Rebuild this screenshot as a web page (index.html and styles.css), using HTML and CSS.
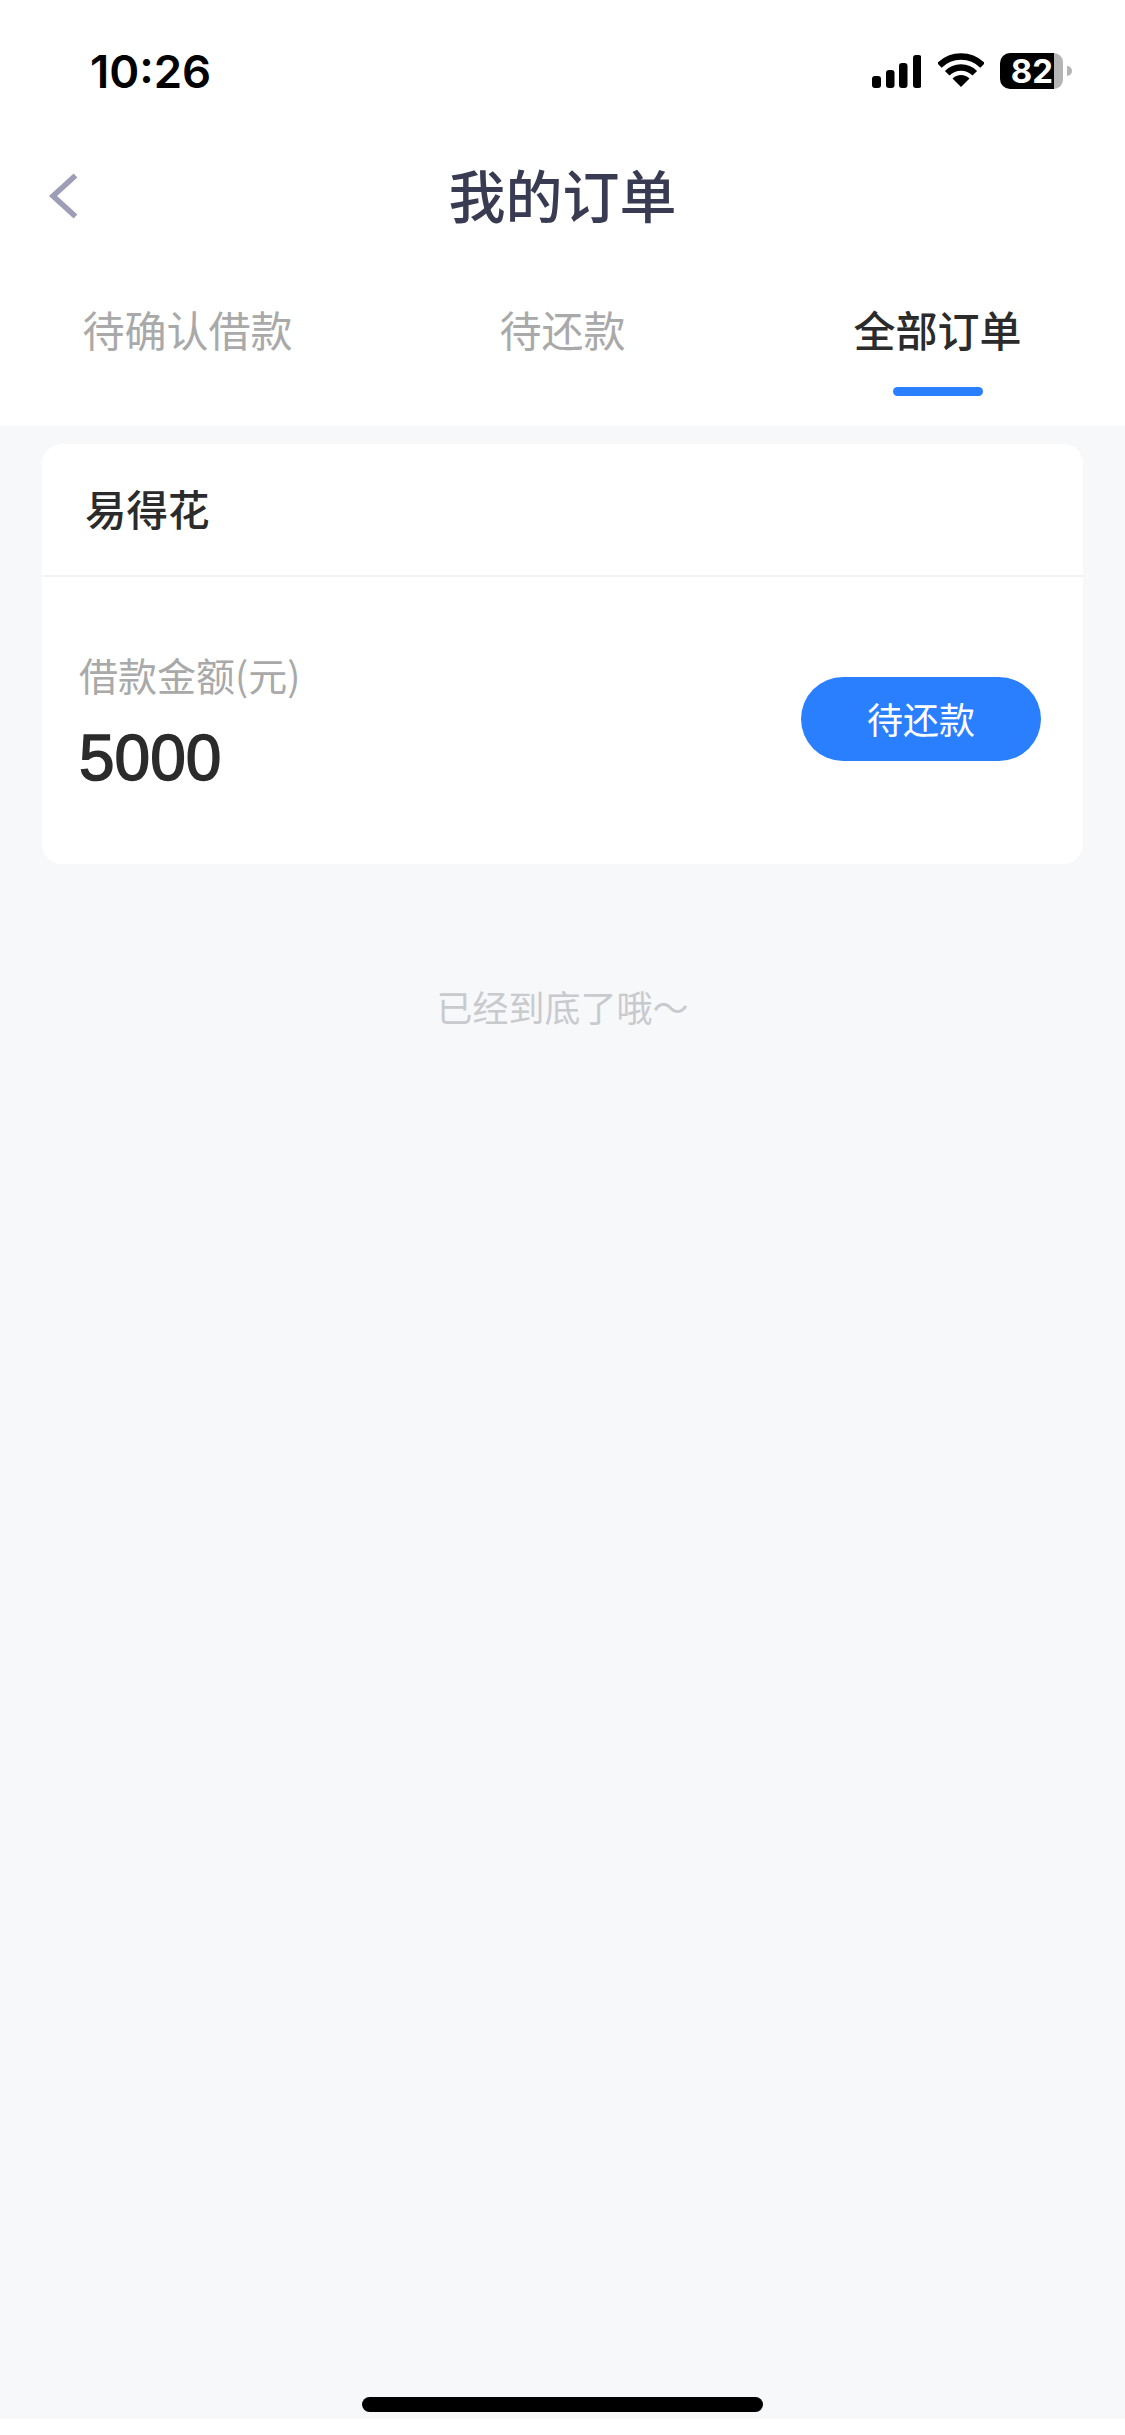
FILE: index.html
```html
<!DOCTYPE html>
<html lang="zh-CN">
<head>
<meta charset="utf-8">
<title>我的订单</title>
<link rel="stylesheet" href="styles.css">
</head>
<body>
<div class="page">
  <header class="top">
    <div class="status">
      <span class="time">10:26</span>
      <div class="status-icons">
        <svg class="signal" viewBox="0 0 49 33" aria-hidden="true">
          <rect x="0" y="21" width="9" height="12" rx="3"/>
          <rect x="14" y="15" width="8.500" height="18" rx="3"/>
          <rect x="27" y="8" width="8.500" height="25" rx="3"/>
          <rect x="41" y="0" width="8.500" height="33" rx="3"/>
        </svg>
        <svg class="wifi" viewBox="0 0 46 34" aria-hidden="true">
          <path class="arc" d="M1.400 12.400A30.500 30.500 0 0 1 44.600 12.400"/>
          <path class="arc" d="M9.200 20.200A19.500 19.500 0 0 1 36.800 20.200"/>
          <path d="M23 34L14.500 25.500A12 12 0 0 1 31.500 25.500Z"/>
        </svg>
        <div class="battery">
          <span class="battery-level">82</span>
          <span class="battery-rest"></span>
          <span class="battery-nub"></span>
        </div>
      </div>
    </div>
    <div class="nav">
      <svg class="back" viewBox="0 0 30 46" aria-hidden="true">
        <path d="M27.500 2.500L5 23L27.500 43.500"/>
      </svg>
      <h1 class="title">我的订单</h1>
    </div>
    <nav class="tabs">
      <div class="tab">待确认借款</div>
      <div class="tab">待还款</div>
      <div class="tab tab-active">全部订单</div>
    </nav>
  </header>
  <main class="content">
    <section class="card">
      <div class="card-head">易得花</div>
      <div class="card-body">
        <div class="amount">
          <div class="amount-label">借款金额(元)</div>
          <div class="amount-value">5000</div>
        </div>
        <div class="pill">待还款</div>
      </div>
    </section>
    <p class="end">已经到底了哦～</p>
    <div class="home-bar"></div>
  </main>
  <div class="bottom-strip"></div>
</div>
</body>
</html>
```
FILE: styles.css
```css
* { box-sizing: border-box; }
html, body { margin: 0; padding: 0; background: #fff; }
body { font-family: "Noto Sans CJK SC", "Noto Sans", sans-serif; }
.page { width: 1125px; height: 2435px; display: flex; flex-direction: column; }

.top { background: #fff; height: 426px; flex: none; }
.status { height: 142px; padding: 53px 53px 0 90px; display: flex; justify-content: space-between; align-items: flex-start; }
.time { font: 600 45.500px/38px Inter, sans-serif; color: #000; }
.status-icons { display: flex; align-items: flex-start; }
.signal { width: 49px; height: 33px; margin-top: 2px; fill: #000; }
.wifi { width: 46px; height: 34px; margin-left: 17px; fill: #000; }
.wifi .arc { fill: none; stroke: #000; stroke-width: 6.500; }
.battery { display: flex; align-items: center; height: 36px; margin-left: 16px; }
.battery-level { width: 54px; height: 36px; background: #000; border-radius: 10px 0 0 10px; color: #fff; font: 700 33px/36px Inter, sans-serif; text-align: right; padding-right: 1px; }
.battery-rest { width: 9px; height: 36px; background: #b5b5b5; border-radius: 0 10px 10px 0; }
.battery-nub { width: 5px; height: 10px; margin-left: 4px; background: #b5b5b5; border-radius: 0 5px 5px 0; }

.nav { height: 110px; display: flex; align-items: center; padding-left: 48px; margin-top: -1px; }
.back { width: 30px; height: 46px; fill: none; stroke: #9d9db8; stroke-width: 5.500; flex: none; }
.title { flex: 1; margin: 0 0 6px -78px; text-align: center; font-size: 57px; line-height: 70px; font-weight: 500; color: #383b52; }

.tabs { display: grid; grid-template-columns: 375px 375px 375px; padding-top: 48px; }
.tab { text-align: center; font-size: 42px; line-height: 60px; color: #a9a9a9; }
.tab-active { color: #2b2b2b; font-weight: 500; display: flex; flex-direction: column; align-items: center; }
.tab-active::after { content: ""; width: 90px; height: 9px; margin-top: 28px; border-radius: 5px; background: #2a7fff; }

.content { height: 1993px; flex: none; background: #f7f8fa; padding: 18px 42px 7px; display: flex; flex-direction: column; }
.card { background: #fff; border-radius: 20px; height: 420px; flex: none; }
.card-head { height: 133px; padding-left: 43px; font-size: 41.500px; line-height: 128px; font-weight: 500; color: #2b2b2b; border-bottom: 2px solid #f2f3f5; }
.card-body { height: 287px; padding: 0 42px 3px 37px; display: flex; align-items: center; justify-content: space-between; }
.amount { margin-top: 3px; }
.amount-label { font-size: 39px; line-height: 56px; color: #a9a9a9; }
.amount-value { font: 400 64px/76px "Liberation Sans", sans-serif; -webkit-text-stroke: 1.500px #2b2b2b; color: #2b2b2b; margin-top: 18px; }
.pill { width: 240px; height: 84px; border-radius: 42px; background: #2a7fff; color: #fff; font-size: 36px; line-height: 82px; text-align: center; }

.end { margin: 115px 0 0; text-align: center; font-size: 36px; line-height: 54px; color: #c9cacd; }
.home-bar { width: 401px; height: 15px; margin: auto auto 0; background: #000; border-radius: 8px; }
.bottom-strip { flex: 1; background: #fff; }
```
